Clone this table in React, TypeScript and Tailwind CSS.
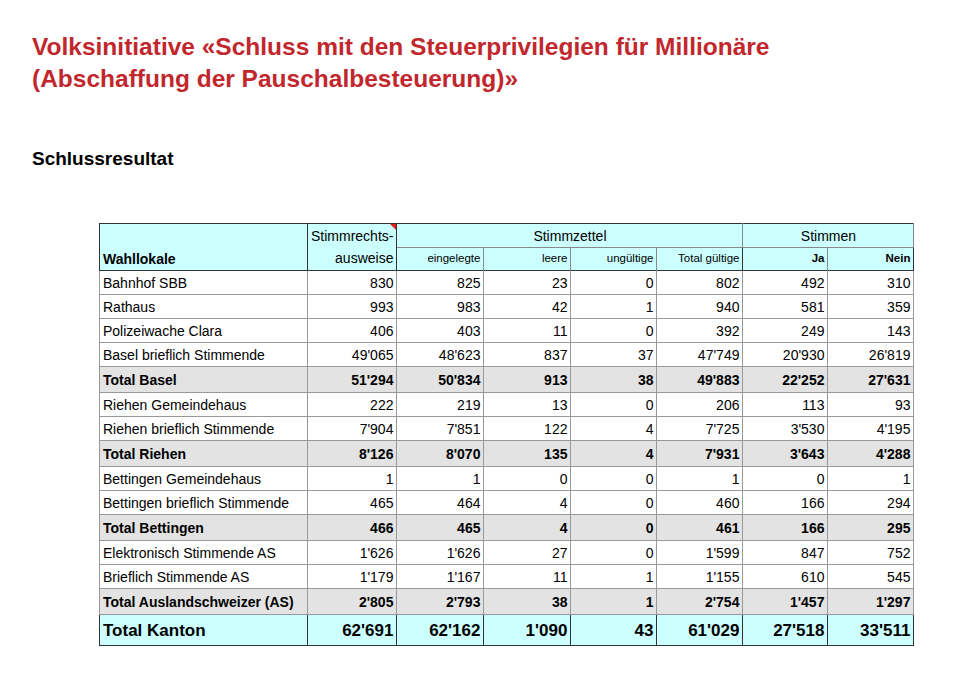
const ROWS: { label: string; v: string[]; kind?: "total" }[] = [
  { label: "Bahnhof SBB", v: ["830", "825", "23", "0", "802", "492", "310"] },
  { label: "Rathaus", v: ["993", "983", "42", "1", "940", "581", "359"] },
  { label: "Polizeiwache Clara", v: ["406", "403", "11", "0", "392", "249", "143"] },
  { label: "Basel brieflich Stimmende", v: ["49'065", "48'623", "837", "37", "47'749", "20'930", "26'819"] },
  { label: "Total Basel", v: ["51'294", "50'834", "913", "38", "49'883", "22'252", "27'631"], kind: "total" },
  { label: "Riehen Gemeindehaus", v: ["222", "219", "13", "0", "206", "113", "93"] },
  { label: "Riehen brieflich Stimmende", v: ["7'904", "7'851", "122", "4", "7'725", "3'530", "4'195"] },
  { label: "Total Riehen", v: ["8'126", "8'070", "135", "4", "7'931", "3'643", "4'288"], kind: "total" },
  { label: "Bettingen Gemeindehaus", v: ["1", "1", "0", "0", "1", "0", "1"] },
  { label: "Bettingen brieflich Stimmende", v: ["465", "464", "4", "0", "460", "166", "294"] },
  { label: "Total Bettingen", v: ["466", "465", "4", "0", "461", "166", "295"], kind: "total" },
  { label: "Elektronisch Stimmende AS", v: ["1'626", "1'626", "27", "0", "1'599", "847", "752"] },
  { label: "Brieflich Stimmende AS", v: ["1'179", "1'167", "11", "1", "1'155", "610", "545"] },
  { label: "Total Auslandschweizer (AS)", v: ["2'805", "2'793", "38", "1", "2'754", "1'457", "1'297"], kind: "total" },
];

const KANTON = ["62'691", "62'162", "1'090", "43", "61'029", "27'518", "33'511"];

const cellV = "border-l border-r border-[#333]";
const cellH = "border-b border-[#999]";

export default function App() {
  return (
    <div className="min-h-[681px] w-[980px] bg-white font-['Liberation_Sans',Arial,sans-serif] text-black">
      <div className="px-8 pt-[31px]">
        <h1 className="text-[24.5px] font-bold leading-[32px] text-[#c1272d]">
          Volksinitiative «Schluss mit den Steuerprivilegien für Millionäre
          <br />
          (Abschaffung der Pauschalbesteuerung)»
        </h1>
        <h2 className="mt-[54px] text-[19px] font-bold leading-5">Schlussresultat</h2>
      </div>

      <div className="ml-[99px] mt-[54px]">
        <table className="border-collapse border border-[#333] text-[14px] leading-none">
          <colgroup>
            <col className="w-[208px]" />
            <col className="w-[86px]" />
            <col className="w-[87px]" />
            <col className="w-[87px]" />
            <col className="w-[86px]" />
            <col className="w-[86px]" />
            <col className="w-[85px]" />
            <col className="w-[86px]" />
          </colgroup>
          <thead className="bg-[#ccffff]">
            <tr className="h-[24px]">
              <th rowSpan={2} className={`${cellV} border-b border-[#333] px-[3px] pb-[4px] text-left align-bottom font-bold`}>
                Wahllokale
              </th>
              <th rowSpan={2} className={`${cellV} relative border-b border-[#333] px-[3px] text-right font-normal`}>
                <div className="leading-[22px]">Stimmrechts-</div>
                <div className="leading-[22px]">ausweise</div>
                <span className="absolute right-0 top-0 h-0 w-0 border-l-[6px] border-t-[6px] border-l-transparent border-t-[#e0201b]" />
              </th>
              <th colSpan={4} className={`${cellV} border-b border-[#888] text-center font-normal`}>
                Stimmzettel
              </th>
              <th colSpan={2} className={`${cellV} border-b border-[#888] text-center font-normal`}>
                Stimmen
              </th>
            </tr>
            <tr className="h-[23px] border-b border-[#333] text-[11.5px]">
              <th className="border-l border-r border-[#888] px-[3px] text-right font-normal">eingelegte</th>
              <th className="border-l border-r border-[#888] px-[3px] text-right font-normal">leere</th>
              <th className="border-l border-r border-[#888] px-[3px] text-right font-normal">ungültige</th>
              <th className="border-l border-r border-[#333] px-[3px] text-right font-normal">Total gültige</th>
              <th className="border-l border-r border-[#888] px-[3px] text-right font-bold">Ja</th>
              <th className="border-l border-r border-[#333] px-[3px] text-right font-bold">Nein</th>
            </tr>
          </thead>
          <tbody>
            {ROWS.map((r) => {
              const total = r.kind === "total";
              return (
                <tr
                  key={r.label}
                  className={total ? "h-[26px] bg-[#e3e3e3] font-bold" : "h-[24px]"}
                >
                  <td className={`${cellV} ${cellH} px-[3px] text-left`}>{r.label}</td>
                  {r.v.map((n, i) => (
                    <td key={i} className={`${cellV} ${cellH} px-[3px] text-right`}>
                      {n}
                    </td>
                  ))}
                </tr>
              );
            })}
            <tr className="h-[31px] border-t border-[#333] bg-[#ccffff] text-[17px] font-bold">
              <td className={`${cellV} px-[3px] text-left`}>Total Kanton</td>
              {KANTON.map((n, i) => (
                <td key={i} className={`${cellV} px-[3px] text-right`}>
                  {n}
                </td>
              ))}
            </tr>
          </tbody>
        </table>
      </div>
    </div>
  );
}
